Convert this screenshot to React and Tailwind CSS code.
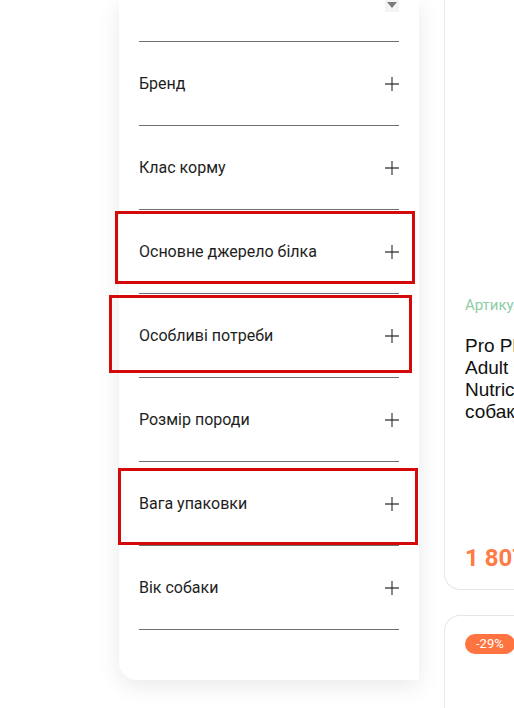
import React from "react";

const items = [
  "Бренд",
  "Клас корму",
  "Основне джерело білка",
  "Особливі потреби",
  "Розмір породи",
  "Вага упаковки",
  "Вік собаки",
];

function Plus() {
  return (
    <svg width="14" height="14" viewBox="0 0 14 14" className="block">
      <path d="M7 0v14" stroke="#6b6b6b" strokeWidth="1.6" />
      <path d="M0 7h14" stroke="#333" strokeWidth="1.3" />
    </svg>
  );
}

export default function App() {
  return (
    <div
      className="relative w-[514px] h-[708px] overflow-hidden bg-white flex items-start"
      style={{ fontFamily: "Roboto, 'Noto Sans', Arial, sans-serif" }}
    >
      {/* Sidebar filter card */}
      <div className="ml-[119px] w-[300px] h-[680px] shrink-0 bg-white rounded-bl-[18px] shadow-[0_6px_24px_rgba(0,0,0,0.09)] px-[20px] flex flex-col">
        <div className="h-[41px] flex justify-end items-start">
          <div className="w-[14px] h-[12px] bg-[#f4f4f4] flex items-start justify-center pt-[2px]">
            <svg width="10" height="6" viewBox="0 0 10 6">
              <path d="M0 0h10L5 6z" fill="#7a7a7a" />
            </svg>
          </div>
        </div>
        {items.map((t) => (
          <div
            key={t}
            className="h-[84px] border-t border-[#6e6e6e] flex items-center justify-between"
          >
            <span className="text-[16px] leading-[20px] text-[#1e1e1e]">{t}</span>
            <Plus />
          </div>
        ))}
        <div className="border-t border-[#6e6e6e]" />
      </div>

      {/* Product column */}
      <div className="ml-[25px] flex flex-col w-[120px] shrink-0">
        <div className="h-[590px] border-l border-b border-[#e6e6e6] rounded-bl-[16px] pl-[20px] flex flex-col">
          <div className="mt-[296px] text-[15px] leading-[18px] text-[#8fcca5] whitespace-nowrap">
            Артикул: 12345678
          </div>
          <div
            className="mt-[21px] text-[19px] leading-[22px] text-[#111] whitespace-nowrap"
            style={{ fontFamily: "'Liberation Sans', Arial, sans-serif" }}
          >
            <div>Pro Plan Medium</div>
            <div>Adult Optidigest</div>
            <div>Nutricion для</div>
            <div>собак</div>
          </div>
          <div className="mt-[121px] text-[24px] leading-[28px] font-bold text-[#ff7a45] whitespace-nowrap">
            1 807 ₴
          </div>
        </div>
        <div className="mt-[25px] h-[200px] border-l border-t border-[#e6e6e6] rounded-tl-[16px] pl-[20px] pt-[15px]">
          <span className="inline-flex items-center h-[20px] px-[11px] rounded-full bg-[#ff7340] text-white text-[13px] leading-[20px]">
            -29%
          </span>
        </div>
      </div>

      {/* Red annotation boxes */}
      <div className="absolute left-[115px] top-[211px] w-[300px] h-[73px] border-[3px] border-[#d40a0a]" />
      <div className="absolute left-[109px] top-[295px] w-[303px] h-[78px] border-[3px] border-[#d40a0a]" />
      <div className="absolute left-[118px] top-[468px] w-[300px] h-[77px] border-[3px] border-[#d40a0a]" />
    </div>
  );
}
